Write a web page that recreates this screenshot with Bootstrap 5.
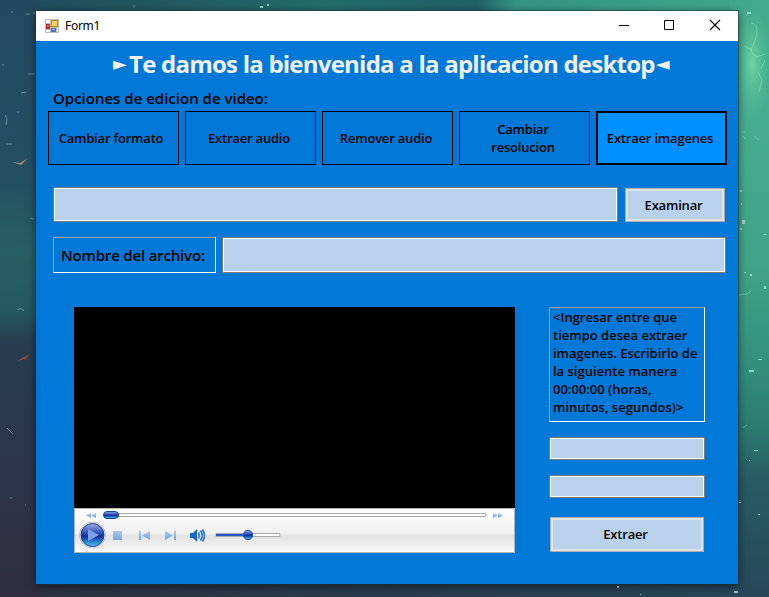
<!DOCTYPE html>
<html lang="es">
<head>
<meta charset="utf-8">
<meta name="viewport" content="width=device-width, initial-scale=1">
<title>Form1</title>
<link href="https://cdn.jsdelivr.net/npm/bootstrap@5.3.0/dist/css/bootstrap.min.css" rel="stylesheet">
<style>
body{font-family:"Open Sans","Noto Sans",sans-serif;background:#234f5e;width:769px;height:597px;color:#000}
.wallpaper{position:absolute;inset:0;z-index:-1}
.desktop-area{padding:11px 31px 13px 36px;height:597px}
.app-window{height:573px;background:#0078d7;box-shadow:0 0 0 1px rgba(25,50,55,.55),0 2px 9px rgba(0,0,0,.55)}
.title-strip{height:30px;padding-left:9px;background:#fff;font:12px "Noto Sans",sans-serif}
.title-strip .caption{margin:-1px 0 0 6px;letter-spacing:-.3px}
.win-controls svg{width:46px;height:30px}
.win-controls svg:first-child{margin-right:-1px}
.headline{font-weight:700;font-size:24px;line-height:32px;height:32px;margin:7px 0 0 77px;color:#f0f0f0;letter-spacing:-.77px}
.headline .tip{font-family:"DejaVu Sans",sans-serif;font-size:18px;font-weight:400;width:16px;letter-spacing:0}
.headline .tip:last-child{margin-left:1px}
.section-label{font-weight:600;font-size:15px;line-height:20px;margin:8px 0 0 17px;height:23px}
.options{margin-left:12px;gap:6px}
.options .btn,.silver{border-radius:0;font-weight:600;font-size:13px;line-height:18px;color:#000;padding:0 3px 0 0;letter-spacing:-.2px}
.options .btn{width:131px;height:54px;border:1px solid #000}
.options .btn:first-child{padding-right:5px}
.options .btn.active{background:#0090ff;border:2px solid #000;color:#000;padding-right:3px}
.silver{background:#b9d1ea;border:3px solid #e1e1e1;outline:1px solid #adadad;outline-offset:-1px}
.field{background:#b9d1ea;border:1px solid #7a7a7a;box-shadow:inset 0 0 0 1px #fff;border-radius:0;padding:0 4px}
.field:focus{background:#b9d1ea}
.sunken{border:1px solid;border-color:#a0a0a0 #fff #fff #a0a0a0;font-weight:600}
.row-source{margin:22px 13px 0 17px;gap:7px}
.row-source .field{width:565px;height:35px}
.row-source .silver{width:100px;height:34px;margin-top:1px}
.row-name{margin:15px 12px 0 17px;gap:6px}
.row-name .sunken{width:163px;height:36px;font-size:15px;padding-left:7px;letter-spacing:-.18px}
.row-name .field{width:504px;height:36px}
.workspace{margin:34px 33px 0 38px}
.player{width:441px;height:246px;background:#000;padding-top:201px}
.player svg{display:block}
.side{width:156px}
.hint{height:115px;font-size:13px;line-height:18px;padding:0 0 0 3px;white-space:nowrap}
.side .field{height:23px;margin-top:15px}
.side .silver{width:154px;height:35px;margin:19px 0 0 1px;padding-bottom:2px}
</style>
</head>
<body class="overflow-hidden m-0">
<svg class="wallpaper" width="769" height="597" aria-hidden="true">
<defs>
<linearGradient id="topg"><stop offset="0" stop-color="#214b5e"/><stop offset=".2" stop-color="#22585f"/><stop offset=".42" stop-color="#246d6b"/><stop offset=".62" stop-color="#226068"/><stop offset=".67" stop-color="#359483"/><stop offset="1" stop-color="#43a88b"/></linearGradient>
<linearGradient id="leftg" x2="0" y2="1"><stop offset="0" stop-color="#23495e"/><stop offset=".3" stop-color="#245062"/><stop offset=".42" stop-color="#276064"/><stop offset=".52" stop-color="#265860"/><stop offset=".57" stop-color="#273f52"/><stop offset=".75" stop-color="#2c364c"/><stop offset="1" stop-color="#302e40"/></linearGradient>
<linearGradient id="rightg" x2="0" y2="1"><stop offset="0" stop-color="#43a98b"/><stop offset=".2" stop-color="#48ad8f"/><stop offset=".45" stop-color="#3fa388"/><stop offset=".6" stop-color="#34917d"/><stop offset=".72" stop-color="#2b7a70"/><stop offset=".8" stop-color="#285c63"/><stop offset="1" stop-color="#27475b"/></linearGradient>
<linearGradient id="botg"><stop offset="0" stop-color="#2c3040"/><stop offset=".4" stop-color="#293a4b"/><stop offset="1" stop-color="#27475b"/></linearGradient>
<radialGradient id="glow"><stop offset="0" stop-color="#7be0ac" stop-opacity=".75"/><stop offset="1" stop-color="#55c39a" stop-opacity="0"/></radialGradient>
</defs>
<path fill="url(#botg)" d="M0 560h769v37H0z"/><path fill="url(#topg)" d="M0 0h769v20H0z"/><path fill="url(#leftg)" d="M0 0h40v597H0z"/><path fill="url(#rightg)" d="M730 0h39v597h-39z"/>
<ellipse cx="752" cy="64" rx="20" ry="58" fill="url(#glow)"/>
<g fill="none" stroke="#9ec9c8" stroke-width="1" opacity=".55"><path d="M11 12h2M26 14h4M33 13h2M2 65h2M28 74h7M21 93l5-1M5 115l2 4-1 6M6 144h6M18 111v2M134 5v3M30 218l4 1M7 428l3 3 3 3M10 498h2M25 505h1M17 310q4-3 7 1"/></g>
<path d="M12 162l8 1 5-3 9-5-7 4-6 6z" fill="#dba9a0" opacity=".7"/><path d="M17 361l7-4 6-3-4 5z" fill="#a5503f" opacity=".8"/>
<g fill="none" stroke="#9af5cb" stroke-width="1" opacity=".45"><path d="M746 16l3-3M751 23q5 0 6 7t-4 15 4 12l8-3M758 72l4 8-3 12M765 60l-4 9M744 46l8 4M741 132h5M743 136l3 3M754 136l5 4M739 295l8-1 4-3M743 428l4-3"/></g>
<g fill="#a8e8dc" opacity=".8"><path d="M260 6h3v2h-3zM267 4h2v2h-2zM747 12h4v2h-4zM740 190h2v2h-2zM741 203h1v2h-1zM742 220h3v4h-3zM740 228h2v2h-2zM764 234h2v1h-2zM744 272h2v1h-2zM750 274h2v2h-2zM764 286h2v3h-2zM758 359h4v1h-4zM749 370h5v2h-5zM754 450h4v1h-4zM749 460h1v1h-1zM739 502h2v1h-2zM758 514h2v1h-2zM734 591h4v2h-4zM617 586h2v2h-2zM640 594h1v1h-1z"/></g>
</svg>
<main class="desktop-area">
<div class="app-window">
<header class="title-strip d-flex align-items-center">
<svg width="14" height="14" viewBox="0 0 14 14" aria-hidden="true"><path fill="#bdbdbd" d="M0 0h14v14H0z"/><path fill="#fff" d="M1 1h4v3H1zM1 11h4v2H1zM12 9h1v4h-1z"/><path fill="#b52a1c" d="M1 5h4v5H1z"/><path fill="#e86b5c" d="M2 6h2v2H2z"/><path fill="#b98a18" d="M6 1h7v7H6z"/><path fill="#ffd55c" d="M7 2h5v5H7z"/><path fill="#3f73d4" d="M6 9h5v4H6z"/><path fill="#8fb8f4" d="M7 10h3v1H7z"/></svg>
<span class="caption">Form1</span>
<div class="win-controls d-flex ms-auto">
<svg viewBox="0 0 46 30"><path d="M18 14.5h10" stroke="#000"/></svg><svg viewBox="0 0 46 30"><path d="M18.500 9.500h9v9h-9z" fill="none" stroke="#000"/></svg><svg viewBox="0 0 46 30"><path d="M18 9l10 10M28 9L18 19" stroke="#000" stroke-width="1.100"/></svg>
</div>
</header>
<h1 class="headline d-flex mb-0 text-nowrap"><span class="tip">►</span><span>Te damos la bienvenida a la aplicacion desktop</span><span class="tip">◄</span></h1>
<div class="section-label">Opciones de edicion de video:</div>
<div class="options d-flex">
<button class="btn">Cambiar formato</button><button class="btn">Extraer audio</button><button class="btn">Remover audio</button><button class="btn">Cambiar<br>resolucion</button><button class="btn active">Extraer imagenes</button>
</div>
<div class="row-source d-flex"><input class="form-control field" aria-label="Archivo"><button class="btn silver">Examinar</button></div>
<div class="row-name d-flex"><label class="sunken d-flex align-items-center text-nowrap" for="fname">Nombre del archivo:</label><input id="fname" class="form-control field"></div>
<div class="workspace d-flex justify-content-between">
<div class="player">
<svg width="441" height="45" viewBox="0 0 441 45" aria-hidden="true">
<defs><linearGradient id="pg" x2="0" y2="1"><stop offset="0" stop-color="#fff"/><stop offset=".58" stop-color="#f0f0f0"/><stop offset=".6" stop-color="#e1e1e1"/><stop offset="1" stop-color="#fbfbfb"/></linearGradient><linearGradient id="bl" x2="0" y2="1"><stop offset="0" stop-color="#9aaee2"/><stop offset=".4" stop-color="#3153ba"/><stop offset=".55" stop-color="#0b2a9c"/><stop offset="1" stop-color="#4bd0ff"/></linearGradient><linearGradient id="ic" x2="0" y2="1"><stop offset="0" stop-color="#a9c8f2"/><stop offset="1" stop-color="#74a4df"/></linearGradient></defs>
<path fill="url(#pg)" d="M0 0h441v45H0z"/><path fill="none" stroke="#b5b5b5" d="M.5.5h440v44H.5z"/>
<path fill="url(#ic)" d="M17 5v5l-5-2.500zM22 5v5l-5-2.500zM419 5v5l5-2.500zM424 5v5l5-2.500z"/>
<path fill="#fff" stroke="#a5a5a5" d="M31 5.500h379q2 0 2 1.500t-2 1.500H31z"/>
<rect x="29.500" y="3.500" width="15" height="7" rx="3.500" fill="url(#bl)" stroke="#1d3f9b"/>
<circle cx="18.500" cy="27" r="13" fill="#f7f7f7" stroke="#b9bcc4"/><circle cx="18.500" cy="27" r="11.500" fill="url(#bl)" stroke="#203a8c"/><path d="M14 21v12l11-6z" fill="#7ca5e8"/>
<path fill="url(#ic)" d="M39 23h9v9h-9zM65 23h2v9h-2zM76 23v9l-8-4.500zM91 23v9l8-4.500zM100 23h2v9h-2z"/>
<path fill="#1467cf" d="M116 25h3l4-4v13l-4-4h-3z"/><path fill="none" stroke="#2273d3" stroke-width="1.700" d="M124.500 24.500q1.500 3 0 6M126.500 22.500q3.500 5 0 10M128.500 21.500q4 6 0 12"/>
<path fill="#fff" stroke="#aaa" d="M142 25.500h64v3h-64z"/><path fill="#2257c9" d="M142 26h32v2h-32z"/><circle cx="174" cy="27" r="4.700" fill="url(#bl)" stroke="#254ba9"/>
</svg>
</div>
<div class="side d-flex flex-column">
<div class="hint sunken">&lt;Ingresar entre que<br>tiempo desea extraer<br>imagenes. Escribirlo de<br>la siguiente manera<br>00:00:00 (horas,<br>minutos, segundos)&gt;</div>
<input class="form-control field" aria-label="Inicio"><input class="form-control field" aria-label="Fin">
<button class="btn silver">Extraer</button>
</div>
</div>
</div>
</main>
<script src="https://cdn.jsdelivr.net/npm/bootstrap@5.3.0/dist/js/bootstrap.bundle.min.js"></script>
</body>
</html>
